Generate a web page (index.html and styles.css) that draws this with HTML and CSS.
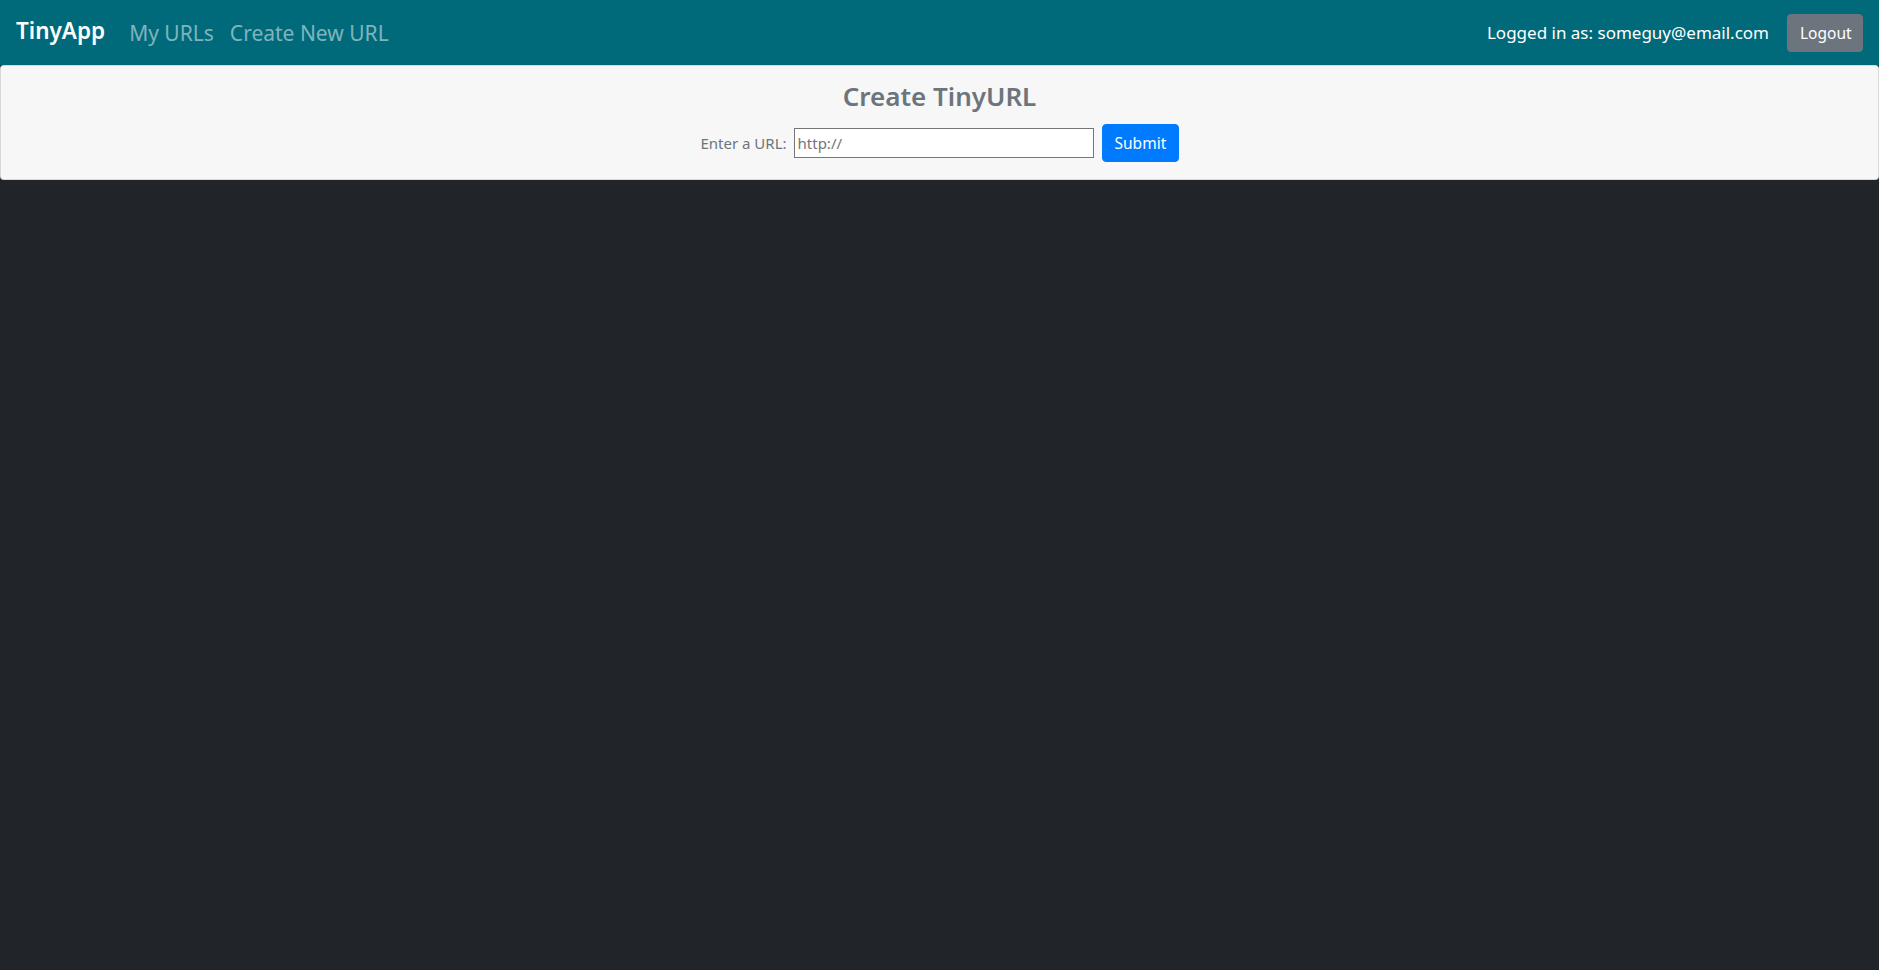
FILE: index.html
```html
<!DOCTYPE html>
<html lang="en">
<head>
<meta charset="utf-8">
<title>TinyApp</title>
<link rel="stylesheet" href="styles.css">
</head>
<body>
<nav class="navbar">
  <div class="nav-left">
    <a class="brand" href="#">TinyApp</a>
    <a class="nav-link" href="#">My URLs</a>
    <a class="nav-link" href="#">Create New URL</a>
  </div>
  <div class="nav-right">
    <span class="nav-text">Logged in as: someguy@email.com</span>
    <button class="btn btn-secondary" type="button">Logout</button>
  </div>
</nav>
<main class="card">
  <h3 class="card-title">Create TinyURL</h3>
  <form class="url-form">
    <label class="url-label" for="longURL">Enter a URL:</label>
    <input class="url-input" id="longURL" type="text" placeholder="http://">
    <button class="btn btn-primary" type="button">Submit</button>
  </form>
</main>
</body>
</html>
```
FILE: styles.css
```css
* { box-sizing: border-box; }
html, body { margin: 0; padding: 0; }
body {
  background: #212529;
  font-family: "Noto Sans", "Open Sans", "DejaVu Sans", sans-serif;
  color: #212529;
  min-height: 970px;
}
.navbar {
  height: 65px;
  background: #006a7b;
  display: flex;
  align-items: center;
  justify-content: space-between;
  padding: 0 16px 0 16px;
}
.nav-left { display: flex; align-items: center; }
.brand {
  color: #fff;
  text-decoration: none;
  font-size: 22.5px;
  font-weight: 600;
  margin-right: 24px;
  margin-top: -5px;
}
.nav-link {
  color: rgba(255,255,255,0.5);
  text-decoration: none;
  font-size: 21px;
  margin-right: 16px;
}
.nav-right { display: flex; align-items: center; }
.nav-text {
  color: #fff;
  font-size: 17px;
  margin-right: 18px;
}
.btn {
  font-family: inherit;
  font-size: 15.5px;
  height: 38px;
  padding: 0 12px;
  border: 1px solid transparent;
  border-radius: 4px;
  color: #fff;
  cursor: pointer;
}
.btn-secondary { background: #6c757d; border-color: #6c757d; width: 76px; }
.btn-primary { background: #007bff; border-color: #007bff; width: 77px; }
.card {
  background: #f7f7f7;
  border: 1px solid rgba(0,0,0,0.125);
  border-radius: 4px;
  height: 115px;
  display: flex;
  flex-direction: column;
  align-items: center;
  padding-top: 12px;
}
.card-title {
  margin: 0;
  color: #6c757d;
  font-size: 26px;
  font-weight: 600;
  line-height: 36px;
}
.url-form {
  display: flex;
  align-items: center;
  margin-top: 10px;
}
.url-label {
  color: #6c757d;
  font-size: 15px;
  margin-right: 7px;
}
.url-input {
  width: 300px;
  height: 30px;
  border: 1px solid #767676;
  background: #fff;
  font-family: inherit;
  font-size: 15px;
  padding: 0 3px;
  margin-right: 8px;
  outline: none;
}
.url-input::placeholder { color: #757575; }
```
